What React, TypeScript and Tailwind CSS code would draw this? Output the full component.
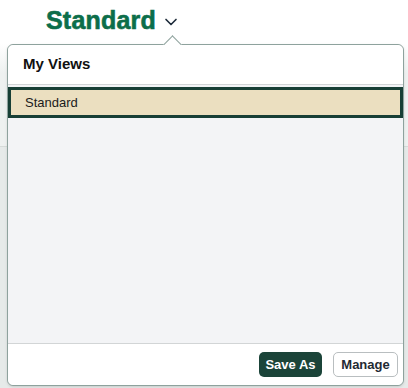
import { ChevronDown } from "lucide-react";

const views = [{ id: "standard", name: "Standard", selected: true }];

export default function App() {
  return (
    <div
      className="relative h-[388px] w-[408px] overflow-hidden bg-white"
      style={{ fontFamily: '"Liberation Sans", Arial, sans-serif' }}
    >
      <header className="h-[146px] bg-gradient-to-b from-white from-30% to-[#eef1f0] to-50%">
        <div className="flex items-center pl-[46px] pt-[4px]">
          <h1 className="text-[25px] font-bold leading-[32px] tracking-[0.2px] text-[#0c6e4a] [-webkit-text-stroke:0.6px_#0c6e4a]">
            Standard
          </h1>
          <ChevronDown
            className="ml-[5px] mt-[3px] h-[20px] w-[20px] text-[#1d2b3a]"
            strokeWidth={2}
          />
        </div>
      </header>
      <div className="h-[242px] border-t border-[#d6dbd9] bg-[#e6eae9]" />

      <div className="absolute left-[7px] top-[44px] flex h-[342px] w-[397px] flex-col rounded-[6px] border border-[#8ea29d] bg-white shadow-sm">
        <span className="absolute -top-[7px] left-[158px] h-[13px] w-[13px] rotate-45 border-l border-t border-[#8ea29d] bg-white" />
        <div className="relative flex h-[39px] items-center rounded-t-[6px] bg-white px-[15px]">
          <h2 className="text-[15px] font-bold text-[#111]">My Views</h2>
        </div>
        <div className="flex-1 border-t border-[#d2d5d6] bg-[#f3f4f6] pt-[2px]">
          {views.map((v) => (
            <div
              key={v.id}
              className={
                v.selected
                  ? "flex h-[31px] items-center border-[3px] border-[#173f35] bg-[#ebdfc0] px-[14px] text-[13px] text-[#1b1b1b]"
                  : "flex h-[31px] items-center px-[17px] text-[13px] text-[#1b1b1b]"
              }
            >
              {v.name}
            </div>
          ))}
        </div>
        <div className="flex h-[42px] items-center justify-end gap-[11px] rounded-b-[6px] border-t border-[#d2d5d6] bg-white pr-[5px]">
          <button className="h-[25px] w-[63px] rounded-[5px] bg-[#1b4439] text-[13px] font-bold text-white">
            Save As
          </button>
          <button className="h-[25px] w-[65px] rounded-[5px] border border-[#b9bec0] bg-white text-[13px] font-bold text-[#1f2a33]">
            Manage
          </button>
        </div>
      </div>
    </div>
  );
}
